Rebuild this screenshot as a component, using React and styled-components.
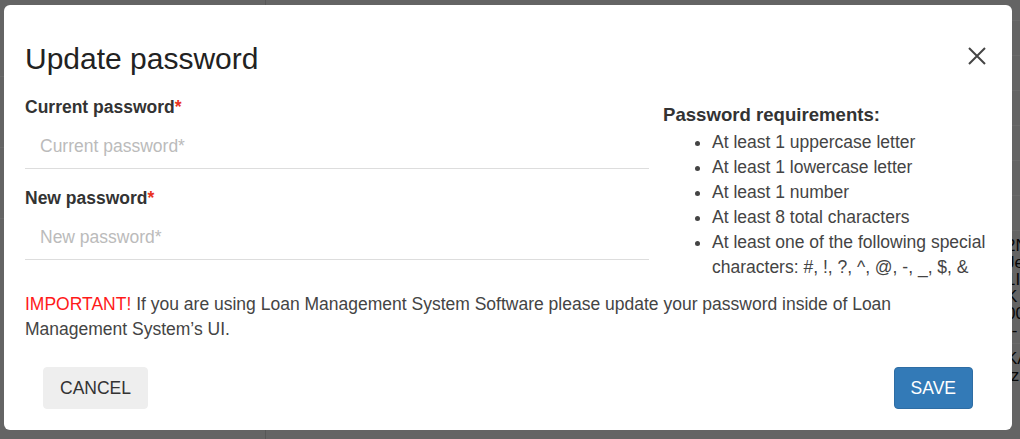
import React from "react"
import styled, { createGlobalStyle } from "styled-components"

const GlobalStyle = createGlobalStyle`
  body {
    margin: 0;
    font-family: "Liberation Sans", Arial, sans-serif;
  }
`

const requirements = [
  "At least 1 uppercase letter",
  "At least 1 lowercase letter",
  "At least 1 number",
  "At least 8 total characters",
  "At least one of the following special characters: #, !, ?, ^, @, -, _, $, &",
]

const bgRows = ["2N", "Je", "1I", "K", "00", "--"]

const App = () => {
  return (
    <Page>
      <GlobalStyle />
      <Behind>
        <Sidebar>
          <SideRow />
          <SideRow />
          <SideRow />
        </Sidebar>
        <Main>
          <Row />
          <Row />
          <Row />
          <Row />
          <Row />
          <Row />
          <CellBlock>
            {bgRows.map((t) => (
              <Cell key={t}>{t}</Cell>
            ))}
          </CellBlock>
          <CellBlock>
            <Cell>KA</Cell>
            <Cell>/z</Cell>
          </CellBlock>
        </Main>
      </Behind>
      <Overlay />
      <Dialog>
        <Header>
          <Title>Update password</Title>
          <CloseButton aria-label="Close">
            <svg width="18" height="18" viewBox="0 0 18 18">
              <path d="M1 1 L17 17 M17 1 L1 17" stroke="#444" strokeWidth="2" />
            </svg>
          </CloseButton>
        </Header>
        <Body>
          <Fields>
            <Field>
              <Label>
                Current password<Star>*</Star>
              </Label>
              <Input type="password" placeholder="Current password*" />
            </Field>
            <Field>
              <Label>
                New password<Star>*</Star>
              </Label>
              <Input type="password" placeholder="New password*" />
            </Field>
          </Fields>
          <Requirements>
            <ReqTitle>Password requirements:</ReqTitle>
            <ReqList>
              {requirements.map((r) => (
                <li key={r}>{r}</li>
              ))}
            </ReqList>
          </Requirements>
        </Body>
        <Notice>
          <Important>IMPORTANT!</Important> If you are using Loan Management System Software please
          update your password inside of Loan Management System’s UI.
        </Notice>
        <Footer>
          <Button>CANCEL</Button>
          <Button primary>SAVE</Button>
        </Footer>
      </Dialog>
    </Page>
  )
}

export default App

const Page = styled.div`
  position: relative;
  width: 1020px;
  height: 439px;
  overflow: hidden;
  background: #eeeeee;
`

const Behind = styled.div`
  display: flex;
  height: 100%;
`

const Sidebar = styled.div`
  width: 266px;
  border-right: 1px solid #cfcfcf;
  padding-top: 76px;
  box-sizing: border-box;
`

const SideRow = styled.div`
  height: 70px;
  border-top: 1px solid #ffffff;
`

const Main = styled.div`
  flex: 1;
  display: flex;
  flex-direction: column;
  align-items: flex-end;
  padding-top: 20px;
`

const Row = styled.div`
  width: 100%;
  height: 34px;
  border-top: 1px solid #ffffff;
`

const CellBlock = styled.div`
  width: 100%;
  border-top: 1px solid #ffffff;
  padding: 6px 0 4px;
  display: flex;
  flex-direction: column;
  align-items: flex-end;
`

const Cell = styled.div`
  font-size: 17px;
  line-height: 17px;
  color: #111;
  width: 14px;
  overflow: hidden;
`

const Overlay = styled.div`
  position: absolute;
  inset: 0;
  background: rgba(0, 0, 0, 0.58);
`

const Dialog = styled.div`
  position: absolute;
  left: 4px;
  top: 5px;
  width: 1008px;
  height: 425px;
  box-sizing: border-box;
  background: #fff;
  border-radius: 6px;
  padding: 37px 0 21px;
  display: flex;
  flex-direction: column;
`

const Header = styled.div`
  display: flex;
  justify-content: space-between;
  align-items: center;
  padding: 0 26px 0 21px;
`

const Title = styled.h2`
  margin: 0;
  font-size: 30px;
  line-height: 33px;
  font-weight: 400;
  color: #222;
`

const CloseButton = styled.button`
  border: none;
  background: none;
  padding: 0;
  width: 18px;
  height: 18px;
  display: flex;
  cursor: pointer;
  margin-top: -6px;
`

const Body = styled.div`
  display: grid;
  grid-template-columns: 624px 1fr;
  gap: 14px;
  padding: 0 21px;
  margin-top: 20px;
`

const Fields = styled.div`
  display: flex;
  flex-direction: column;
  gap: 17px;
`

const Field = styled.div`
  display: flex;
  flex-direction: column;
`

const Label = styled.label`
  font-size: 17.5px;
  line-height: 25px;
  font-weight: 700;
  color: #333;
`

const Star = styled.span`
  color: #e8321e;
`

const Input = styled.input`
  height: 49px;
  box-sizing: border-box;
  border: none;
  border-bottom: 1px solid #dddddd;
  padding: 5px 15px 0;
  font-family: inherit;
  font-size: 17.5px;
  color: #333;
  outline: none;
  background: transparent;

  &::placeholder {
    color: #bbbbbb;
  }
`

const Requirements = styled.div`
  padding-top: 7px;
`

const ReqTitle = styled.h4`
  margin: 0;
  font-size: 18.6px;
  line-height: 25px;
  font-weight: 700;
  color: #333;
`

const ReqList = styled.ul`
  margin: 3px 0 0;
  padding-left: 49px;
  font-size: 17.5px;
  line-height: 25px;
  color: #444;
`

const Notice = styled.p`
  margin: 12px 0 0;
  padding: 0 21px;
  font-size: 17.5px;
  line-height: 25px;
  color: #444;
`

const Important = styled.span`
  color: #ff1a1a;
`

const Footer = styled.div`
  margin-top: auto;
  display: flex;
  justify-content: space-between;
  padding: 0 39px;
`

const Button = styled.button`
  height: 42px;
  padding: 0 16px;
  border-radius: 4px;
  font-family: inherit;
  font-size: 17.5px;
  cursor: pointer;
  border: 1px solid ${(p) => (p.primary ? "#2e6da4" : "#eeeeee")};
  background: ${(p) => (p.primary ? "#337ab7" : "#eeeeee")};
  color: ${(p) => (p.primary ? "#fff" : "#333")};
`
